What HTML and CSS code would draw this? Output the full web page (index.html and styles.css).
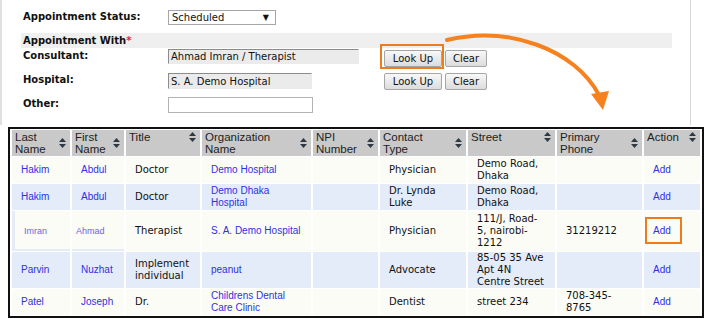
FILE: index.html
```html
<!DOCTYPE html>
<html lang="en">

<head>
    <meta charset="UTF-8">
    <meta name="viewport" content="width=device-width, initial-scale=1.0">
    <title>Appointment - Look Up</title>
    <link rel="stylesheet" href="styles.css">
</head>

<body>
    <div class="page">
        <div class="panel">
            <div class="form-row status-row">
                <label class="field-label">Appointment Status:</label>
                <div class="select"><span>Scheduled</span><span class="select-arrow">&#9660;</span></div>
            </div>

            <div class="band">Appointment With<span class="req">*</span></div>

            <div class="form-row consult-row">
                <label class="field-label">Consultant:</label>
                <div><input type="text" class="text-input wide" value="Ahmad Imran / Therapist" readonly /></div>
                <div class="buttons">
                    <button class="btn btn-lookup">Look Up</button>
                    <button class="btn btn-clear">Clear</button>
                </div>
            </div>
            <div class="form-row">
                <label class="field-label">Hospital:</label>
                <div><input type="text" class="text-input short" value="S. A. Demo Hospital" readonly /></div>
                <div class="buttons">
                    <button class="btn btn-lookup">Look Up</button>
                    <button class="btn btn-clear">Clear</button>
                </div>
            </div>
            <div class="form-row">
                <label class="field-label">Other:</label>
                <div><input type="text" class="text-input blank" /></div>
            </div>
        </div>

        <div class="results">
            <table class="grid">
                <colgroup>
                    <col class="c-last">
                    <col class="c-first">
                    <col class="c-title">
                    <col class="c-org">
                    <col class="c-npi">
                    <col class="c-type">
                    <col class="c-street">
                    <col class="c-phone">
                    <col class="c-action">
                </colgroup>
                <thead>
                    <tr>
                        <th><div class="th-inner"><span>Last<br>Name</span><svg class="sort" width="7" height="10" viewBox="0 0 7 10"><path d="M3.5 0L7 4H0z M0 6h7L3.5 10z"/></svg></div></th>
                        <th><div class="th-inner"><span>First<br>Name</span><svg class="sort" width="7" height="10" viewBox="0 0 7 10"><path d="M3.5 0L7 4H0z M0 6h7L3.5 10z"/></svg></div></th>
                        <th><div class="th-inner"><span>Title</span><svg class="sort" width="7" height="10" viewBox="0 0 7 10"><path d="M3.5 0L7 4H0z M0 6h7L3.5 10z"/></svg></div></th>
                        <th><div class="th-inner"><span>Organization<br>Name</span><svg class="sort" width="7" height="10" viewBox="0 0 7 10"><path d="M3.5 0L7 4H0z M0 6h7L3.5 10z"/></svg></div></th>
                        <th><div class="th-inner"><span>NPI<br>Number</span><svg class="sort" width="7" height="10" viewBox="0 0 7 10"><path d="M3.5 0L7 4H0z M0 6h7L3.5 10z"/></svg></div></th>
                        <th><div class="th-inner"><span>Contact<br>Type</span><svg class="sort" width="7" height="10" viewBox="0 0 7 10"><path d="M3.5 0L7 4H0z M0 6h7L3.5 10z"/></svg></div></th>
                        <th><div class="th-inner"><span>Street</span><svg class="sort" width="7" height="10" viewBox="0 0 7 10"><path d="M3.5 0L7 4H0z M0 6h7L3.5 10z"/></svg></div></th>
                        <th><div class="th-inner"><span>Primary<br>Phone</span><svg class="sort" width="7" height="10" viewBox="0 0 7 10"><path d="M3.5 0L7 4H0z M0 6h7L3.5 10z"/></svg></div></th>
                        <th><div class="th-inner"><span>Action</span><svg class="sort" width="7" height="10" viewBox="0 0 7 10"><path d="M3.5 0L7 4H0z M0 6h7L3.5 10z"/></svg></div></th>
                    </tr>
                </thead>
                <tbody>
                    <tr class="odd">
                        <td><a class="link">Hakim</a></td>
                        <td><a class="link">Abdul</a></td>
                        <td>Doctor</td>
                        <td><a class="link">Demo Hospital</a></td>
                        <td></td>
                        <td>Physician</td>
                        <td>Demo Road,<br>Dhaka</td>
                        <td></td>
                        <td><a class="link">Add</a></td>
                    </tr>
                    <tr class="even">
                        <td><a class="link">Hakim</a></td>
                        <td><a class="link">Abdul</a></td>
                        <td>Doctor</td>
                        <td><a class="link">Demo Dhaka<br>Hospital</a></td>
                        <td></td>
                        <td>Dr. Lynda<br>Luke</td>
                        <td>Demo Road,<br>Dhaka</td>
                        <td></td>
                        <td><a class="link">Add</a></td>
                    </tr>
                    <tr class="odd row-active">
                        <td class="cell-last"><a class="link">Imran</a></td>
                        <td class="cell-first"><a class="link">Ahmad</a></td>
                        <td>Therapist</td>
                        <td><a class="link">S. A. Demo Hospital</a></td>
                        <td></td>
                        <td>Physician</td>
                        <td>111/J, Road-<br>5, nairobi-<br>1212</td>
                        <td>31219212</td>
                        <td><a class="link">Add</a></td>
                    </tr>
                    <tr class="even">
                        <td><a class="link">Parvin</a></td>
                        <td><a class="link">Nuzhat</a></td>
                        <td>Implement<br>individual</td>
                        <td><a class="link">peanut</a></td>
                        <td></td>
                        <td>Advocate</td>
                        <td>85-05 35 Ave<br>Apt 4N<br>Centre Street</td>
                        <td></td>
                        <td><a class="link">Add</a></td>
                    </tr>
                    <tr class="odd">
                        <td><a class="link">Patel</a></td>
                        <td><a class="link">Joseph</a></td>
                        <td>Dr.</td>
                        <td><a class="link">Childrens Dental<br>Care Clinic</a></td>
                        <td></td>
                        <td>Dentist</td>
                        <td>street 234</td>
                        <td>708-345-<br>8765</td>
                        <td><a class="link">Add</a></td>
                    </tr>
                </tbody>
            </table>
        </div>

        <!-- annotations -->
        <div class="mark mark-lookup"></div>
        <div class="mark mark-add"></div>
        <svg class="arrow" width="704" height="319" viewBox="0 0 704 319">
            <path d="M447 40 C 510 25, 575 50, 599 95" fill="none" stroke="#f5821f" stroke-width="4" stroke-linecap="round"/>
            <polygon points="591,94 609,91 603,110" fill="#f5821f"/>
        </svg>
    </div>
</body>

</html>
```

FILE: styles.css
```css
* {
    margin: 0;
    padding: 0;
    box-sizing: border-box;
}

body {
    background: #fff;
    font-family: "DejaVu Sans", Verdana, sans-serif;
    font-size: 10px;
    color: #111;
}

.page {
    position: relative;
    width: 704px;
    height: 319px;
    overflow: hidden;
}

/* form panel */
.panel {
    width: 691px;
    height: 125px;
    border-left: 2px solid #e0e0e0;
    border-right: 1px solid #d6d6d6;
    padding: 10px 18px 0 19px;
}

.form-row {
    display: grid;
    grid-template-columns: 147px 216px auto;
    align-items: start;
    height: 24px;
}

.status-row {
    height: 15px;
}

.field-label {
    font-weight: bold;
    line-height: 14px;
    padding-left: 2px;
}

.select {
    width: 108px;
    height: 15px;
    border: 1px solid #a6a6a6;
    display: flex;
    justify-content: space-between;
    align-items: center;
    padding: 0 6px 0 3px;
    line-height: 13px;
}

.select-arrow {
    font-size: 8px;
}

.band {
    margin-top: 8px;
    margin-bottom: 1px;
    height: 15px;
    line-height: 15px;
    background: #efefef;
    font-weight: bold;
    padding-left: 2px;
}

.req {
    color: #e8174f;
}

.text-input {
    height: 15px;
    font: 10px "DejaVu Sans", Verdana, sans-serif;
    color: #111;
    padding: 0 2px;
    background: #ebebeb;
    border: 1px solid #ebebeb;
    border-top-color: #8c8c8c;
    border-left-color: #8c8c8c;
    outline: none;
}

.wide {
    width: 191px;
}

.short {
    width: 144px;
    height: 16px;
}

.blank {
    width: 145px;
    height: 16px;
    background: #fff;
    border: 1px solid #b4b4b4;
}

.buttons {
    display: flex;
    gap: 3px;
}

.consult-row .buttons {
    margin-top: 1px;
}

.btn {
    height: 17px;
    font: 10px "DejaVu Sans", Verdana, sans-serif;
    color: #111;
    background: linear-gradient(#f8f8f8, #dcdcdc);
    border: 1px solid #a6a6a6;
    border-radius: 2px;
}

.btn-lookup {
    width: 58px;
}

.btn-clear {
    width: 42px;
}

/* results grid */
.results {
    margin: 2px 0 0 8px;
    width: 696px;
    border: 2px solid #111;
}

.grid {
    width: 100%;
    table-layout: fixed;
    border-collapse: separate;
    border-spacing: 2px 1px;
}

.c-last { width: 58px; }
.c-first { width: 52px; }
.c-title { width: 74px; }
.c-org { width: 109px; }
.c-npi { width: 65px; }
.c-type { width: 86px; }
.c-street { width: 87px; }
.c-phone { width: 85px; }
.c-action { width: 56px; }

.grid th {
    height: 26px;
    background: #c9c9c9;
    font: normal 11.5px/12px "Liberation Sans", Arial, sans-serif;
    color: #1d1d1d;
    text-align: left;
    vertical-align: top;
    padding: 1px 4px 1px 3px;
}

.th-inner {
    display: flex;
    align-items: center;
    justify-content: space-between;
}

.sort {
    flex: none;
    fill: #2e3946;
}

.grid td {
    height: 26px;
    padding: 0 4px 0 9px;
    line-height: 12px;
    vertical-align: middle;
}

.odd {
    background: #fcfcf6;
}

.even {
    background: #e4ecfa;
}

.link {
    font-family: "Liberation Sans", Arial, sans-serif;
    font-size: 10px;
    color: #3030e4;
}

.row-active td {
    height: 40px;
}

.row-active .cell-last {
    padding-left: 12px;
    box-shadow: inset 3px -2px 0 #e6ecf6;
}

.row-active .cell-first {
    padding-left: 4px;
    box-shadow: inset 0 -2px 0 #e6ecf6;
}

.row-active .cell-last .link,
.row-active .cell-first .link {
    font-size: 9px;
    color: #6f62e6;
}

/* annotations */
.mark {
    position: absolute;
    border: 2px solid #ef7c1c;
}

.mark-lookup {
    left: 380px;
    top: 44px;
    width: 64px;
    height: 25px;
}

.mark-add {
    left: 645px;
    top: 217px;
    width: 37px;
    height: 27px;
}

.arrow {
    position: absolute;
    left: 0;
    top: 0;
    pointer-events: none;
}
```
